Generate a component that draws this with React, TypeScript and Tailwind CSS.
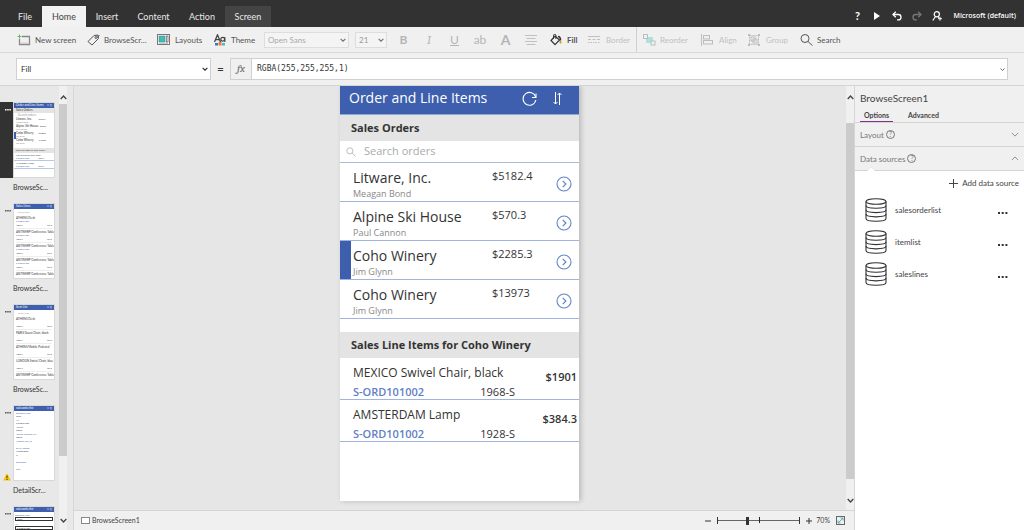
import React from "react";

type IconProps = {
  className?: string;
};

const ChevronDown: React.FC<IconProps> = ({ className }) => (
  <svg viewBox="0 0 10 6" fill="none" stroke="currentColor" className={className}>
    <path d="M1 1l4 4 4-4" />
  </svg>
);

const ChevronUp: React.FC<IconProps> = ({ className }) => (
  <svg viewBox="0 0 10 6" fill="none" stroke="currentColor" className={className}>
    <path d="M1 5l4-4 4 4" />
  </svg>
);

const NewScreenIcon = () => (
  <svg viewBox="0 0 14 12" className="w-[14px] h-3" fill="none">
    <path d="M5 2.500H12.500V10.500H2.500V5" stroke="#888" strokeWidth="1.300" />
    <path d="M4 9h7" stroke="#ccc" />
    <path d="M2.500 0.500v4M0.500 2.500h4" stroke="#5fb96a" />
  </svg>
);

const TagIcon = () => (
  <svg viewBox="0 0 13 12" className="w-[13px] h-3" fill="none" stroke="#555">
    <path d="M1 7.500L7 1.500L11 1L11.500 4.500L5 11Z" strokeLinejoin="round" />
    <circle cx="9" cy="3.500" r="1" />
    <path d="M10 3.500L12.500 1.500" />
  </svg>
);

const LayoutsIcon = () => (
  <svg viewBox="0 0 13 11" className="w-[13px] h-[11px]" fill="none">
    <rect x="0.500" y="0.500" width="12" height="10" fill="#fff" stroke="#777" />
    <rect x="2" y="2" width="6" height="6" fill="#3dbdb5" stroke="#4a8d8a" strokeWidth="0.600" />
    <rect x="9.300" y="2" width="1.700" height="6" fill="#fff" stroke="#555" strokeWidth="0.700" />
    <path d="M2 9.300h9" stroke="#999" strokeWidth="0.700" />
  </svg>
);

const ThemeIcon = () => (
  <svg viewBox="0 0 12 12" className="w-3 h-3" fill="none">
    <path d="M0.500 8L3.500 0.800L6.500 8M1.500 5.700H5.500" stroke="#444" strokeWidth="1.300" />
    <circle cx="8.700" cy="5.300" r="1.900" stroke="#444" strokeWidth="1.200" />
    <path d="M10.800 3v5" stroke="#444" strokeWidth="1.200" />
    <rect x="1" y="9" width="3" height="2.500" fill="#3b78c9" />
    <rect x="4.500" y="8" width="3" height="3.500" fill="#e7803c" />
    <rect x="8" y="9" width="3" height="2.500" fill="#4dc0b5" />
  </svg>
);

const FillIcon = () => (
  <svg viewBox="0 0 12 12" className="w-3 h-3" fill="none">
    <path d="M5 2L9.500 6L5 10.700L1 6.500Z" stroke="#333" strokeWidth="1.200" />
    <path d="M3.500 5V1.500a1.200 1.200 0 0 1 2.400 0V5" stroke="#333" />
    <path d="M8 2.500c2.500 0 2.500 2.500 2.500 4" stroke="#333" strokeWidth="1.600" />
    <path d="M9.500 8c0-1 1-2 1-2s1 1 1 2.500-2 1.500-2 0z" fill="#d99a1e" />
  </svg>
);

const AlignTextIcon = () => (
  <svg viewBox="0 0 12 10" className="w-3 h-[10px]" stroke="#c0c0c0" fill="none">
    <path d="M0 0.500h12M1.500 3.500h9M0 6.500h12M1.500 9.500h9" />
  </svg>
);

const BorderIcon = () => (
  <svg viewBox="0 0 12 8" className="w-3 h-2" stroke="#c0c0c0" fill="none">
    <path d="M0 0.500h12" />
    <path d="M0 3.500h12" strokeDasharray="3 1.500" />
    <path d="M0 6.500h12" strokeDasharray="1.500 1" />
  </svg>
);

const ReorderIcon = () => (
  <svg viewBox="0 0 13 12" className="w-[13px] h-3" fill="none" stroke="#bdbdbd">
    <rect x="3" y="3" width="7" height="6" fill="#a9e3df" stroke="none" />
    <rect x="0.500" y="0.500" width="4" height="4" fill="#f0f0f0" />
    <rect x="8" y="7" width="4" height="4" fill="#f0f0f0" />
  </svg>
);

const AlignIcon = () => (
  <svg viewBox="0 0 12 12" className="w-3 h-3" fill="none" stroke="#bdbdbd">
    <path d="M0.500 0v12" />
    <rect x="2.500" y="1.500" width="6" height="3.500" />
    <rect x="2.500" y="6.500" width="9" height="3.500" />
  </svg>
);

const GroupIcon = () => (
  <svg viewBox="0 0 12 12" className="w-3 h-3" fill="none" stroke="#bdbdbd">
    <rect x="1.500" y="1.500" width="9" height="9" strokeDasharray="2 1" />
    <rect x="3" y="3" width="4" height="4" />
    <rect x="5" y="5" width="4" height="4" />
    <path d="M0 1h2M10 1h2M0 11h2M10 11h2" strokeWidth="2" />
  </svg>
);

const SearchIcon: React.FC<IconProps> = ({ className }) => (
  <svg viewBox="0 0 13 12" className={className} fill="none" stroke="currentColor">
    <circle cx="5" cy="4.500" r="4" />
    <path d="M8 7.500L12.500 11.700" />
  </svg>
);

const UndoIcon: React.FC<IconProps> = ({ className }) => (
  <svg viewBox="0 0 10 10" className={className} fill="none" stroke="currentColor" strokeWidth="1.300">
    <path d="M3.800 0.800L1 3.500L3.800 6.200" />
    <path d="M1 3.500H6.300a2.700 2.700 0 0 1 0 5.400H5" />
  </svg>
);

const PersonIcon = () => (
  <svg viewBox="0 0 10 10" className="w-[10px] h-[10px]" fill="none" stroke="#fff" strokeWidth="1.200">
    <circle cx="4.800" cy="3.300" r="2.600" />
    <path d="M3.500 5.500L0.800 9.500M6 5.500l1 1.300" />
    <path d="M8 5.700v4M6 7.700h4" strokeWidth="1" />
  </svg>
);

const RefreshIcon = () => (
  <svg viewBox="0 0 15 15" className="w-[15px] h-[15px]" fill="none" stroke="#fff" strokeWidth="1.100">
    <path d="M13.700 6.200A6.400 6.400 0 1 0 13.800 9" />
    <path d="M14 2.500V6.500H10" />
  </svg>
);

const SortIcon = () => (
  <svg viewBox="0 0 9 13" className="w-[9px] h-[13px]" fill="none" stroke="#fff">
    <path d="M2.500 0v12M0.500 10l2 2 2-2M6.500 13V1M4.500 3l2-2 2 2" />
  </svg>
);

const ArrowCircle = () => (
  <svg viewBox="0 0 16 16" className="w-4 h-4" fill="none" stroke="#6484c8">
    <circle cx="8" cy="8" r="7" strokeWidth="1.100" />
    <path d="M6.700 4.800L9.900 8L6.700 11.200" strokeWidth="1.200" />
  </svg>
);

const DatabaseIcon = () => (
  <svg viewBox="0 0 22 24" className="w-[22px] h-6" fill="none" stroke="#333" strokeWidth="1.100">
    <ellipse cx="11" cy="3.500" rx="10" ry="2.800" />
    <path d="M1 3.500V20.500C1 24.200 21 24.200 21 20.500V3.500" />
    <path d="M1 7.500C1 11.200 21 11.200 21 7.500M1 11.800C1 15.500 21 15.500 21 11.800M1 16.100C1 19.800 21 19.800 21 16.100" />
  </svg>
);

const HelpIcon = () => (
  <span className="w-[9px] h-[9px] flex items-center justify-center rounded-full border border-[#777] text-[7px] leading-none">
    ?
  </span>
);

const WarningIcon = () => (
  <svg viewBox="0 0 8 8" className="w-2 h-2">
    <path d="M4 0.300L7.900 7.500H0.100Z" fill="#f7c500" />
    <path d="M4 2.500v2.700M4 6v1" stroke="#222" strokeWidth="0.900" />
  </svg>
);

const TopBar = () => (
  <header className="h-[27px] shrink-0 flex items-end justify-between bg-[#323232] text-[#e8e8e8]">
    <nav className="h-[21px] flex items-stretch text-[9px]">
      <button className="w-[42px] pl-2">File</button>
      <button className="w-[44px] bg-[#f2f2f2] text-[#444]">Home</button>
      <button className="w-[42px]">Insert</button>
      <button className="w-[51px]">Content</button>
      <button className="w-[46px]">Action</button>
      <button className="w-[46px] bg-[#444]">Screen</button>
    </nav>
    <div className="h-[22px] flex items-center pr-2">
      <button className="w-5 text-[11px] font-bold text-white">?</button>
      <button aria-label="Play" className="w-5 flex justify-center">
        <svg viewBox="0 0 6 8" className="w-[6px] h-2" fill="#fff">
          <path d="M0 0l6 4-6 4z" />
        </svg>
      </button>
      <button aria-label="Undo" className="w-5 flex justify-center">
        <UndoIcon className="w-[10px] h-[10px] text-white" />
      </button>
      <button aria-label="Redo" className="w-5 flex justify-center">
        <UndoIcon className="w-[10px] h-[10px] text-[#777] -scale-x-100" />
      </button>
      <button aria-label="Account" className="w-5 flex justify-center">
        <PersonIcon />
      </button>
      <span className="pl-[6px] text-[7px] font-semibold text-white font-['Open_Sans','Noto_Sans',sans-serif]">
        Microsoft (default)
      </span>
    </div>
  </header>
);

type ToolProps = {
  label: string;
  icon: React.ReactElement;
  className: string;
  disabled?: boolean;
};

const Tool: React.FC<ToolProps> = ({ label, icon, className, disabled }) => (
  <button disabled={disabled} className={`flex items-center shrink-0 ${className}`}>
    {icon}
    <span>{label}</span>
  </button>
);

const ToolBar = () => (
  <div className="h-[26px] shrink-0 flex items-center pl-[17px] bg-[#f0f0f0] border-b border-[#d8d8d8] text-[8px] text-[#555]">
    <Tool label="New screen" icon={<NewScreenIcon />} className="w-[70px] gap-1" />
    <Tool label="BrowseScr..." icon={<TagIcon />} className="w-[70px] gap-1" />
    <Tool label="Layouts" icon={<LayoutsIcon />} className="w-[57px] gap-[5px]" />
    <Tool label="Theme" icon={<ThemeIcon />} className="w-[50px] gap-[5px]" />
    <div className="relative w-[85px] shrink-0">
      <select aria-label="Font" className="appearance-none block w-full h-4 pl-[3px] border border-[#ddd] bg-[#f4f4f4] text-[#aaa]">
        <option>Open Sans</option>
      </select>
      <ChevronDown className="absolute right-[3px] top-[6px] w-[6px] h-1 text-[#777] stroke-2 pointer-events-none" />
    </div>
    <div className="relative w-8 shrink-0 ml-[6px]">
      <select aria-label="Font size" className="appearance-none block w-full h-4 pl-[3px] border border-[#ddd] bg-[#f4f4f4] text-[#999]">
        <option>21</option>
      </select>
      <ChevronDown className="absolute right-[3px] top-[6px] w-[6px] h-1 text-[#777] stroke-2 pointer-events-none" />
    </div>
    <div className="flex items-center shrink-0 text-[12px] leading-4 text-[#b5b5b5]">
      <button disabled className="w-[33px] font-bold">B</button>
      <button disabled className="w-[18px] italic font-serif">I</button>
      <button disabled className="w-[33px] underline">U</button>
      <button disabled className="w-[18px]">ab</button>
      <button disabled className="w-[33px] text-[14px] font-bold">A</button>
      <button disabled className="w-[18px] flex justify-center" aria-label="Align text">
        <AlignTextIcon />
      </button>
    </div>
    <Tool label="Fill" icon={<FillIcon />} className="w-[38px] ml-[10px] gap-[5px] font-bold" />
    <div className="self-stretch flex items-center border-r border-[#d0d0d0] text-[#c0c0c0]">
      <Tool label="Border" icon={<BorderIcon />} className="w-[48px] gap-[6px]" disabled />
    </div>
    <div className="flex items-center shrink-0 pl-[6px] text-[#c0c0c0]">
      <Tool label="Reorder" icon={<ReorderIcon />} className="w-[58px] gap-1" disabled />
      <Tool label="Align" icon={<AlignIcon />} className="w-[47px] gap-[6px]" disabled />
      <Tool label="Group" icon={<GroupIcon />} className="w-[52px] gap-[6px]" disabled />
    </div>
    <Tool label="Search" icon={<SearchIcon className="w-[13px] h-3" />} className="gap-1" />
  </div>
);

const FormulaBar = () => (
  <div className="h-[33px] shrink-0 flex items-center pl-4 pr-4 bg-[#f0f0f0] border-b border-[#d4d4d4] text-[8px] text-[#333]">
    <div className="relative w-[195px] shrink-0">
      <select aria-label="Property" className="appearance-none block w-full h-[22px] pl-1 border border-[#d0d0d0] bg-white">
        <option>Fill</option>
      </select>
      <ChevronDown className="absolute right-[3px] top-[9px] w-[6px] h-1 stroke-2 pointer-events-none" />
    </div>
    <span className="w-[19px] text-center text-[12px]">=</span>
    <div className="relative flex-1 h-[22px] flex border border-[#d0d0d0] bg-white">
      <span className="w-[21px] flex items-center justify-center border-r border-[#d0d0d0] bg-[#f0f0f0] font-serif italic text-[11px] text-[#666]">
        fx
      </span>
      <input
        aria-label="Formula"
        defaultValue="RGBA(255,255,255,1)"
        className="flex-1 pl-[5px] font-['DejaVu_Sans_Mono',monospace] outline-none"
      />
      <ChevronDown className="absolute right-[2px] top-[9px] w-[5px] h-[3px] stroke-2 text-[#666]" />
    </div>
  </div>
);

const MiniHeader: React.FC<{ title: string }> = ({ title }) => (
  <div className="h-[5px] flex items-center justify-between px-[2px] bg-[#3d5fad] text-white">
    <span>{title}</span>
    <span>○ ↕</span>
  </div>
);

const MiniOrders = () => (
  <>
    <MiniHeader title="Order and Line Items" />
    <p className="h-[5px] px-[2px] pt-px bg-[#e4e4e4]">Sales Orders</p>
    <p className="h-[5px] px-1 pt-px text-[#999]">Search orders</p>
    {orders.map((order, i) => (
      <div
        key={i}
        className={`h-[7px] flex items-start justify-between border-l-2 pr-2 ${
          order.selected ? "border-[#3d5fad]" : "border-white"
        }`}
      >
        <span>
          {order.customer}
          <span className="block text-[2px] text-[#888]">{order.contact}</span>
        </span>
        <span className="text-[2px]">{order.total}</span>
      </div>
    ))}
    <p className="h-[5px] mt-[2px] px-[2px] pt-px bg-[#e4e4e4] text-[2px]">Sales Line Items for Coho Winery</p>
    {lines.map((line) => (
      <div key={line.item} className="h-2 px-[2px] border-b border-[#b8c6e6] pt-px text-[2px]">
        {line.item}
        <div className="flex justify-between pr-2 text-[#3d5fad]">
          <span>{line.order}</span>
          <span className="text-[#555]">{line.code}</span>
        </div>
      </div>
    ))}
  </>
);

type MiniListProps = {
  title: string;
  items: string[];
  sub: string;
};

const MiniList: React.FC<MiniListProps> = ({ title, items, sub }) => (
  <>
    <MiniHeader title={title} />
    <p className="h-[6px] px-1 pt-[2px] text-[2px] text-[#999]">Search items</p>
    {items.map((item, i) => (
      <div key={i} className="px-[2px] pt-[2px]">
        {item}
        {i < 4 && (
          <>
            <p className="h-[3px] text-[2px] text-[#3d5fad]">{sub}</p>
            <div className="h-[6px] flex justify-between pt-px border-b border-[#eee] text-[2px]">
              <span>1896-S</span>
              <span>$649</span>
            </div>
          </>
        )}
      </div>
    ))}
  </>
);

const MiniDetail = () => (
  <>
    <MiniHeader title="salesorderlist" />
    {details.map((detail) => (
      <div key={detail[0]} className="h-[7px] px-[2px] pt-px text-[2px] text-[#3d5fad]">
        {detail[0]}
        <p className="text-[#333]">{detail[1]}</p>
      </div>
    ))}
  </>
);

const MiniEdit = () => (
  <>
    <MiniHeader title="salesorderlist" />
    {details.slice(0, 2).map((detail) => (
      <div key={detail[0]} className="px-px pt-[2px] text-[2px] text-[#3d5fad]">
        {detail[0]}
        <p className="h-1 px-px border border-[#333] leading-[2px] text-[#333]">{detail[1]}</p>
      </div>
    ))}
  </>
);

const details = [
  ["Document_Type", "Order"],
  ["No", "S-ORD101002"],
  ["Amount", "2285.3"],
  ["Amount_Including_VAT", "2285.3"],
  ["Assigned_User_ID", ""],
  ["Bill_to_Contact", "Meagan Bond"],
  ["Id", ""],
  ["Description", ""],
  ["Type", ""],
];

const orders = [
  { customer: "Litware, Inc.", contact: "Meagan Bond", total: "$5182.4" },
  { customer: "Alpine Ski House", contact: "Paul Cannon", total: "$570.3" },
  { customer: "Coho Winery", contact: "Jim Glynn", total: "$2285.3", selected: true },
  { customer: "Coho Winery", contact: "Jim Glynn", total: "$13973" },
];

const lines = [
  { item: "MEXICO Swivel Chair, black", order: "S-ORD101002", code: "1968-S", price: "$1901" },
  { item: "AMSTERDAM Lamp", order: "S-ORD101002", code: "1928-S", price: "$384.3" },
];

const screens = [
  { label: "BrowseSc...", view: <MiniOrders />, selected: true },
  {
    label: "BrowseSc...",
    view: (
      <MiniList
        title="Sales Lines"
        sub="S-ORD101002"
        items={[
          "ATHENS Desk",
          "ANTWERP Conference Table",
          "ANTWERP Conference Table",
          "ANTWERP Conference Table",
          "ANTWERP Conference Table",
        ]}
      />
    ),
  },
  {
    label: "BrowseSc...",
    view: (
      <MiniList
        title="Item List"
        sub=""
        items={[
          "ATHENS Desk",
          "PARIS Guest Chair, black",
          "ATHENS Mobile Pedestal",
          "LONDON Swivel Chair, blue",
          "ANTWERP Conference Table",
        ]}
      />
    ),
  },
  { label: "DetailScr...", view: <MiniDetail />, warning: true },
  { label: "EditScree...", view: <MiniEdit /> },
];

type ScrollBarProps = {
  thumb: string;
};

const ScrollBar: React.FC<ScrollBarProps> = ({ thumb }) => (
  <div className="w-2 shrink-0 flex flex-col bg-[#f0f0f0] text-[#444]">
    <div className="h-[18px] flex items-center justify-center pt-1">
      <ChevronUp className="w-[7px] h-[5px] stroke-2" />
    </div>
    <div className={`flex-1 bg-[#cbcbcb] ${thumb}`}></div>
    <div className="h-5 flex items-center justify-center">
      <ChevronDown className="w-[7px] h-[5px] stroke-2" />
    </div>
  </div>
);

const ScreenList = () => (
  <aside className="w-[74px] shrink-0 flex bg-[#e8e8e8] border-r border-[#d6d6d6]">
    <div className="w-[59px] pt-4 pr-1 overflow-hidden">
      {screens.map((screen, i) => (
        <div key={i} className="h-[101px]">
          <div className={`h-[76px] flex ${screen.selected ? "bg-[#323232] text-white" : "text-[#555]"}`}>
            <div className="w-[13px] shrink-0 flex flex-col items-end justify-between pr-[2px]">
              <button aria-label="Screen options" className="pt-[7px]">
                <svg viewBox="0 0 6 2" className="w-[6px] h-[2px]" fill="currentColor">
                  <path d="M0 0h1.500v1.500H0zM2.200 0h1.500v1.500H2.200zM4.400 0h1.500v1.500H4.400z" />
                </svg>
              </button>
              {screen.warning && <WarningIcon />}
            </div>
            <div className="flex-1 min-w-0 border border-[#d8d8d8] bg-white overflow-hidden whitespace-nowrap text-[3px] leading-[3px] text-[#333]">
              {screen.view}
            </div>
          </div>
          <p className="pl-[13px] pt-[3px] text-[7px] leading-3 text-[#333]">{screen.label}</p>
        </div>
      ))}
    </div>
    <ScrollBar thumb="mb-[54px]" />
  </aside>
);

const Phone = () => (
  <div className="w-[239px] h-[415px] bg-white shadow-[2px_0_5px_rgba(0,0,0,0.2)] font-['Open_Sans','Noto_Sans',sans-serif] text-[#333]">
    <div className="h-[29px] flex items-center pl-[9px] pr-[17px] pb-1 bg-[#3d5fad] border-b border-[#8ea6d8] text-white">
      <h1 className="flex-1 text-[14px] leading-5">Order and Line Items</h1>
      <button aria-label="Refresh" className="mr-4">
        <RefreshIcon />
      </button>
      <button aria-label="Sort">
        <SortIcon />
      </button>
    </div>
    <h2 className="h-[26px] flex items-center pl-[11px] bg-[#e4e4e4] text-[11px] font-bold">Sales Orders</h2>
    <label className="h-[22px] flex items-center pl-[6px] gap-2 border-b border-[#a9bbe0] text-[#aaa]">
      <SearchIcon className="w-[10px] h-[10px]" />
      <input
        type="text"
        placeholder="Search orders"
        className="flex-1 text-[11px] outline-none placeholder:text-[#aaa]"
      />
    </label>
    {orders.map((order, i) => (
      <div key={i} className="h-[39px] flex border-b border-[#9fb4de]">
        <div className={`w-[11px] ${order.selected ? "bg-[#3d5fad]" : ""}`}></div>
        <div className="w-[141px] pl-[2px] pt-[6px]">
          <p className="text-[14px] leading-[18px]">{order.customer}</p>
          <p className="text-[9px] leading-[14px] text-[#888]">{order.contact}</p>
        </div>
        <p className="flex-1 pt-[6px] text-[11px] leading-[14px]">{order.total}</p>
        <button className="pt-1 pr-[7px]" aria-label="Open order">
          <ArrowCircle />
        </button>
      </div>
    ))}
    <h2 className="h-[26px] mt-[13px] flex items-center pl-[11px] bg-[#e4e4e4] text-[11px] font-bold">
      Sales Line Items for Coho Winery
    </h2>
    {lines.map((line) => (
      <div key={line.item} className="h-[42px] flex justify-between pl-[13px] pr-[2px] border-b border-[#9fb4de]">
        <div className="w-[162px] pt-[6px] whitespace-nowrap">
          <p className="text-[12px] leading-[18px]">{line.item}</p>
          <div className="flex justify-between text-[11px] leading-5">
            <span className="font-semibold text-[#5f80c6]">{line.order}</span>
            <span>{line.code}</span>
          </div>
        </div>
        <p className="pt-3 text-[11px] leading-[14px] font-semibold">{line.price}</p>
      </div>
    ))}
  </div>
);

const StatusBar = () => (
  <footer className="h-5 shrink-0 flex items-center pl-[7px] pr-[9px] bg-[#f0f0f0] border-t border-[#d4d4d4] text-[7px] text-[#444]">
    <svg viewBox="0 0 9 7" className="w-[9px] h-[7px] mr-[2px]" fill="#fff" stroke="#888">
      <rect x="0.500" y="0.500" width="8" height="6" />
    </svg>
    <span className="flex-1">BrowseScreen1</span>
    <button aria-label="Zoom out" className="mr-[6px]">
      <svg viewBox="0 0 6 6" className="w-[6px] h-[6px]" stroke="#333">
        <path d="M0 3h6" />
      </svg>
    </button>
    <div className="relative w-[83px] h-[7px] flex items-center justify-between border-x border-[#333]">
      <input
        type="range"
        aria-label="Zoom"
        min="10"
        max="180"
        defaultValue="70"
        className="appearance-none w-full h-px bg-[#666] [&::-webkit-slider-thumb]:appearance-none [&::-webkit-slider-thumb]:w-[3px] [&::-webkit-slider-thumb]:h-2 [&::-webkit-slider-thumb]:bg-[#333]"
      />
      <span className="absolute left-1/2 top-0 w-px h-[6px] bg-[#222]"></span>
    </div>
    <button aria-label="Zoom in" className="ml-[6px]">
      <svg viewBox="0 0 6 6" className="w-[6px] h-[6px]" stroke="#333">
        <path d="M0 3h6M3 0v6" />
      </svg>
    </button>
    <span className="ml-1 mr-[6px]">70%</span>
    <button aria-label="Fit to window">
      <svg viewBox="0 0 9 9" className="w-[9px] h-[9px]" fill="none">
        <rect x="0.500" y="0.500" width="8" height="8" stroke="#666" />
        <path d="M2 7l5-5M4.500 2H7v2.500M2 4.500V7h2.500" stroke="#3aa9a4" strokeWidth="0.800" />
      </svg>
    </button>
  </footer>
);

const SidePanel = () => (
  <aside className="w-[170px] shrink-0 flex flex-col bg-[#f0f0f0] border-l border-[#d6d6d6] text-[8px] text-[#444]">
    <h2 className="h-6 flex items-center pl-[5px] text-[10px]">BrowseScreen1</h2>
    <div className="h-[13px] flex items-stretch pl-[5px] border-b border-[#d4d4d4] text-[7px] font-bold">
      <button className="w-[33px] border-b border-[#80338c]">Options</button>
      <button className="ml-[15px] pb-px">Advanced</button>
    </div>
    <button className="h-6 flex items-center gap-[2px] pl-[5px] pr-[5px] border-b border-[#d4d4d4] text-[#777]">
      Layout <HelpIcon />
      <ChevronDown className="ml-auto w-2 h-[5px]" />
    </button>
    <button className="relative h-6 flex items-center gap-[2px] pl-[5px] pr-[5px] border-b border-[#d4d4d4] text-[#777]">
      Data sources <HelpIcon />
      <ChevronUp className="ml-auto w-2 h-[5px]" />
      <svg viewBox="0 0 8 5" className="absolute left-3 -bottom-px w-2 h-[5px]" fill="#fff">
        <path d="M0 5l4-4 4 4" stroke="#ddd" strokeWidth="0.500" />
      </svg>
    </button>
    <div className="flex-1 bg-white">
      <button className="h-6 ml-auto flex items-center gap-1 pr-[5px]">
        <svg viewBox="0 0 9 9" className="w-[9px] h-[9px]" stroke="#444">
          <path d="M0 4.500h9M4.500 0v9" />
        </svg>
        Add data source
      </button>
      {["salesorderlist", "itemlist", "saleslines"].map((source) => (
        <div key={source} className="h-8 flex items-center pl-[10px] pr-4 pb-[2px] text-[8px]">
          <DatabaseIcon />
          <span className="flex-1 pl-2">{source}</span>
          <button aria-label="More" className="pt-[6px]">
            <svg viewBox="0 0 10 2" className="w-[10px] h-[2px]" fill="#333">
              <path d="M0 0h2v2H0zM3.700 0h2v2h-2zM7.400 0h2v2h-2z" />
            </svg>
          </button>
        </div>
      ))}
    </div>
  </aside>
);

const App = () => {
  return (
    <div className="h-screen flex flex-col overflow-hidden font-['Lato','Noto_Sans',sans-serif]">
      <TopBar />
      <ToolBar />
      <FormulaBar />
      <div className="flex-1 min-h-0 flex">
        <ScreenList />
        <main className="flex-1 min-w-0 flex flex-col">
          <div className="flex-1 min-h-0 flex bg-[#e6e6e6]">
            <div className="flex-1 flex justify-center pr-px overflow-hidden">
              <Phone />
            </div>
            <ScrollBar thumb="mt-[19px] mb-[11px]" />
          </div>
          <StatusBar />
        </main>
        <SidePanel />
      </div>
    </div>
  );
};

export default App;
